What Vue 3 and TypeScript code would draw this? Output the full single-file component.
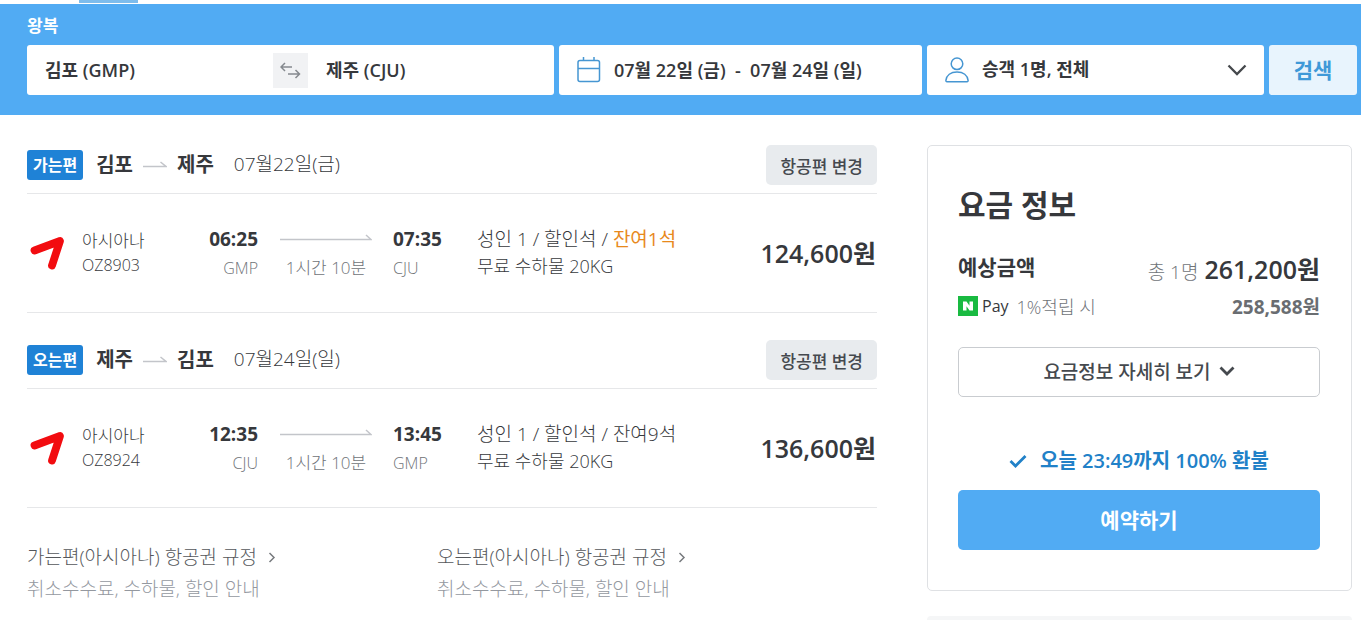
<script setup lang="ts">
import { ref } from 'vue'

interface Flight {
  id: string
  label: string
  from: string
  to: string
  date: string
  airline: string
  flightNo: string
  depart: string
  departCode: string
  arrive: string
  arriveCode: string
  duration: string
  seatLeft: string
  urgent: boolean
  price: string
}

const origin = ref('김포 (GMP)')
const destination = ref('제주 (CJU)')
const dates = ref('07월 22일 (금)  -  07월 24일 (일)')
const passengers = ref('승객 1명, 전체')

const swap = (): void => {
  const previous = origin.value
  origin.value = destination.value
  destination.value = previous
}

const flights: Flight[] = [
  {
    id: 'out', label: '가는편', from: '김포', to: '제주', date: '07월22일(금)',
    airline: '아시아나', flightNo: 'OZ8903', depart: '06:25', departCode: 'GMP',
    arrive: '07:35', arriveCode: 'CJU', duration: '1시간 10분',
    seatLeft: '잔여1석', urgent: true, price: '124,600원',
  },
  {
    id: 'back', label: '오는편', from: '제주', to: '김포', date: '07월24일(일)',
    airline: '아시아나', flightNo: 'OZ8924', depart: '12:35', departCode: 'CJU',
    arrive: '13:45', arriveCode: 'GMP', duration: '1시간 10분',
    seatLeft: '잔여9석', urgent: false, price: '136,600원',
  },
]
</script>

<template>
  <div class="page">
    <div class="tabs"><span class="tab-mark"></span></div>
    <header class="search">
      <p class="trip">왕복</p>
      <form class="fields" @submit.prevent>
        <div class="field route">
          <input v-model="origin" class="text" type="text" aria-label="출발지" />
          <button class="swap" type="button" aria-label="출발지와 도착지 바꾸기" @click="swap">
            <svg width="21" height="17" viewBox="0 0 21 17" fill="none" stroke="#85898e" stroke-width="1.5">
              <path d="M12 5H1.2M5 1 1 5l4 4M8 12h11.500M15.500 8l4 4-4 4" />
            </svg>
          </button>
          <input v-model="destination" class="text" type="text" aria-label="도착지" />
        </div>
        <div class="field">
          <svg class="lead" width="24" height="26" viewBox="0 0 24 26" fill="none" stroke="#4696d2" stroke-width="1.500">
            <rect x="1" y="3.500" width="21.500" height="21" rx="2" />
            <path d="M1 11.500h21.500M6.500 0v4M17 0v4" />
          </svg>
          <input v-model="dates" class="text" type="text" aria-label="여행 날짜" />
        </div>
        <div class="field">
          <svg class="lead" width="24" height="26" viewBox="0 0 24 26" fill="none" stroke="#4696d2" stroke-width="1.500">
            <circle cx="12" cy="6.800" r="5.800" />
            <path d="M2 24.800c-.8 0-1.200-.6-1.100-1.400C1.500 18.400 5.600 15 12 15s10.500 3.400 11.100 8.400c.1.800-.3 1.400-1.100 1.400z" />
          </svg>
          <select v-model="passengers" class="text" aria-label="승객 및 좌석">
            <option>승객 1명, 전체</option>
          </select>
          <svg class="caret" width="20" height="12" viewBox="0 0 20 12" fill="none" stroke="#45484c" stroke-width="2.300">
            <path d="m1.500 1.500 8.500 8.500 8.500-8.500" />
          </svg>
        </div>
        <button class="submit" type="submit">검색</button>
      </form>
    </header>

    <main class="content">
      <div class="journey">
        <section v-for="f in flights" :key="f.id" class="flight">
          <div class="head">
            <span class="badge">{{ f.label }}</span>
            <div class="where">
              <h2 class="cities">
                <span>{{ f.from }}</span>
                <svg width="24" height="12" viewBox="0 0 24 12" fill="none" stroke="#c3c5ca" stroke-width="1.500">
                  <path d="M0 9.500h23L17.500 5" />
                </svg>
                <span>{{ f.to }}</span>
              </h2>
              <span class="date">{{ f.date }}</span>
            </div>
            <button class="change" type="button">항공편 변경</button>
          </div>
          <div class="row">
            <svg class="logo" width="38" height="38" viewBox="0 0 38 38" fill="none" stroke="#f20c10" stroke-linecap="round" stroke-linejoin="round">
              <path d="M7.500 17.500 33 8 25 32.500" stroke-width="7.800" />
            </svg>
            <div class="airline">
              <span class="airline-name">{{ f.airline }}</span>
              <span>{{ f.flightNo }}</span>
            </div>
            <div class="stop depart">
              <strong>{{ f.depart }}</strong>
              <span>{{ f.departCode }}</span>
            </div>
            <div class="leg">
              <svg width="92" height="8" viewBox="0 0 92 8" fill="none" stroke="#c3c5ca" stroke-width="1.500">
                <path d="M0 5.500h91L86 1" />
              </svg>
              <span>{{ f.duration }}</span>
            </div>
            <div class="stop">
              <strong>{{ f.arrive }}</strong>
              <span>{{ f.arriveCode }}</span>
            </div>
            <div class="detail">
              <span class="fare">성인 1 / 할인석 / <em :class="{ urgent: f.urgent }">{{ f.seatLeft }}</em></span>
              <span>무료 수하물 20KG</span>
            </div>
            <strong class="price">{{ f.price }}</strong>
          </div>
        </section>

        <nav class="rules">
          <a v-for="f in flights" :key="f.id" class="rule" href="#">
            <span class="rule-title">
              {{ f.label }}({{ f.airline }}) 항공권 규정
              <svg width="8" height="11" viewBox="0 0 8 11" fill="none" stroke="#777a7e" stroke-width="1.500">
                <path d="m1.500 1 4.500 4.500L1.500 10" />
              </svg>
            </span>
            <span class="rule-note">취소수수료, 수하물, 할인 안내</span>
          </a>
        </nav>
      </div>

      <aside class="side">
        <section class="card">
          <h1 class="title">요금 정보</h1>
          <div class="line total">
            <strong class="label">예상금액</strong>
            <span class="sum"><span class="count">총 1명</span><strong>261,200원</strong></span>
          </div>
          <div class="line pay">
            <span class="npay">
              <svg width="20" height="20" viewBox="0 0 20 20">
                <path fill="#19ba41" d="M0 0h20v20H0z" />
                <path fill="#fff" d="M5 5.500h3.500l3 4.300V5.500H15v9h-3.500l-3-4.300v4.300H5z" />
              </svg>
              <span class="brand">Pay</span>
              <span>1%적립 시</span>
            </span>
            <strong>258,588원</strong>
          </div>
          <button class="more" type="button">
            요금정보 자세히 보기
            <svg width="16" height="11" viewBox="0 0 16 11" fill="none" stroke="#45494e" stroke-width="2.800">
              <path d="m1.500 1.500 6.500 6.500 6.500-6.500" />
            </svg>
          </button>
          <p class="refund">
            <svg width="18" height="14" viewBox="0 0 18 14" fill="none" stroke="#2181c8" stroke-width="2.800">
              <path d="m1.500 7 5 5L16.500 2" />
            </svg>
            오늘 23:49까지 100% 환불
          </p>
          <button class="book" type="button">예약하기</button>
        </section>
        <div class="next-card"></div>
      </aside>
    </main>
  </div>
</template>

<style>
body {
  background: #fff;
}
</style>

<style scoped>
.page {
  display: flex;
  flex-direction: column;
  min-height: 100vh;
  color: #36383c;
  font-family: "Open Sans", "Noto Sans CJK KR", sans-serif;
  font-size: 18px;
}
.page * {
  box-sizing: border-box;
}
button,
input,
select {
  margin: 0;
  padding: 0;
  border: 0;
  font-family: inherit;
}
button {
  padding-bottom: 2px;
  cursor: pointer;
}
svg {
  display: block;
  flex: none;
}
.tabs {
  height: 4px;
  padding-left: 79px;
}
.tab-mark {
  display: block;
  width: 59px;
  height: 3px;
  background: #7dbcec;
}
.search {
  padding: 10px 4px 20px 27px;
  background: #51abf3;
}
.trip {
  margin: 0 0 7px;
  color: #fff;
  font-size: 17px;
  font-weight: 600;
  line-height: 24px;
}
.fields {
  display: grid;
  grid-template-columns: 527fr 363fr 337fr 88fr;
  gap: 5px;
}
.field {
  display: flex;
  align-items: center;
  min-width: 0;
  height: 50px;
  padding: 0 17px 0 18px;
  border-radius: 3px;
  background: #fff;
}
.route {
  padding-right: 0;
}
.text {
  flex: 1;
  min-width: 0;
  height: 50px;
  padding-bottom: 2px;
  background: transparent;
  color: #36383c;
  font-size: 18px;
  font-weight: 600;
  white-space: pre;
  appearance: none;
  outline: none;
}
.lead {
  margin-right: 13px;
}
.swap {
  display: flex;
  align-items: center;
  justify-content: center;
  width: 35px;
  height: 35px;
  margin-right: 18px;
  padding: 0;
  background: #f1f2f4;
}
.caret {
  pointer-events: none;
}
.submit {
  border-radius: 3px;
  background: #e8f4fd;
  color: #3f99d8;
  font-size: 21px;
  font-weight: 600;
}
.content {
  display: grid;
  flex: 1;
  grid-template-columns: 2fr 1fr;
  gap: 50px;
  padding: 30px 9px 0 27px;
}
.flight {
  margin-bottom: 27px;
}
.head {
  display: flex;
  align-items: center;
  height: 49px;
  padding-bottom: 8px;
  border-bottom: 1px solid #e6e7e9;
}
.badge {
  padding: 0 6px;
  border-radius: 3px;
  background: #1f82d6;
  color: #fff;
  font-size: 16px;
  font-weight: 600;
  line-height: 30px;
}
.where {
  display: flex;
  align-items: center;
  gap: 20px;
  padding: 0 0 4px 13px;
}
.cities {
  display: flex;
  align-items: center;
  gap: 10px;
  margin: 0;
  font-size: 20px;
  font-weight: 600;
}
.date {
  font-size: 19px;
  font-weight: 300;
}
.change {
  height: 40px;
  margin-left: auto;
  padding: 0 14px;
  border-radius: 5px;
  background: #e8ebee;
  color: #45494e;
  font-size: 17px;
  font-weight: 500;
}
.row {
  display: grid;
  grid-template-columns: 55px 106px 70px 22px 92px 21px 84px 1fr auto;
  align-items: start;
  height: 119px;
  padding-top: 32px;
  border-bottom: 1px solid #e6e7e9;
}
.logo {
  margin-top: 7px;
}
.airline,
.stop,
.leg,
.detail {
  display: flex;
  flex-direction: column;
  white-space: nowrap;
}
.airline {
  padding-top: 2px;
  color: #36383c;
  font-size: 16px;
  font-weight: 300;
  line-height: 25px;
}
.airline-name {
  font-size: 17px;
}
.stop {
  grid-column: 7;
  color: #6f7378;
  font-size: 16px;
  font-weight: 300;
  line-height: 30px;
}
.stop strong {
  color: #36383c;
  font-size: 19px;
  font-weight: 700;
  line-height: 27px;
}
.depart {
  grid-column: 3;
  text-align: right;
}
.leg {
  grid-column: 5;
  align-items: center;
  color: #6f7378;
  font-size: 17px;
  font-weight: 300;
  line-height: 30px;
}
.leg svg {
  width: 100%;
  margin: 8px 0 11px;
}
.detail {
  font-size: 18px;
  font-weight: 300;
  line-height: 27px;
}
.fare {
  font-size: 19px;
}
.detail em {
  font-style: normal;
}
.detail .urgent {
  color: #e8891c;
  font-weight: 400;
}
.price {
  padding: 11px 1px 0 0;
  font-size: 25px;
  font-weight: 600;
  line-height: 32px;
}
.rules {
  display: flex;
  margin-top: 33px;
}
.rule {
  display: flex;
  flex-direction: column;
  width: 410px;
  color: #54575b;
  font-size: 19px;
  font-weight: 300;
  line-height: 32px;
  text-decoration: none;
  white-space: nowrap;
}
.rule-title {
  display: flex;
  align-items: center;
  gap: 11px;
}
.rule-note {
  color: #94989f;
}
.side {
  display: flex;
  flex-direction: column;
  gap: 25px;
}
.card {
  display: flex;
  flex-direction: column;
  padding: 38px 31px 40px 30px;
  border: 1px solid #dfe1e4;
  border-radius: 5px;
}
.title {
  margin: 0 0 21px;
  font-size: 30px;
  font-weight: 600;
  line-height: 42px;
}
.line {
  display: flex;
  align-items: center;
  justify-content: space-between;
  white-space: nowrap;
}
.total {
  height: 42px;
}
.label {
  padding-bottom: 4px;
  font-size: 21px;
  font-weight: 600;
}
.sum {
  display: flex;
  align-items: baseline;
  gap: 6px;
  font-size: 25px;
}
.sum strong {
  font-weight: 600;
}
.count {
  color: #6f7378;
  font-size: 19px;
  font-weight: 300;
}
.pay {
  height: 33px;
  margin-bottom: 25px;
  color: #6a6d71;
}
.pay strong {
  font-size: 19px;
}
.npay {
  display: flex;
  align-items: center;
  color: #6f7378;
  font-weight: 300;
}
.brand {
  margin: 0 8px 0 4px;
  color: #36383c;
  font-size: 16px;
  font-weight: 400;
}
.more {
  display: flex;
  align-items: center;
  justify-content: center;
  gap: 8px;
  height: 50px;
  border: 1px solid #c9ccd0;
  border-radius: 5px;
  background: #fff;
  color: #45494e;
  font-size: 19px;
  font-weight: 500;
}
.refund {
  display: flex;
  align-items: center;
  justify-content: center;
  gap: 13px;
  margin: 48px 0 13px;
  color: #2181c8;
  font-size: 20px;
  font-weight: 600;
  line-height: 32px;
  white-space: nowrap;
}
.book {
  height: 60px;
  border-radius: 5px;
  background: #51abf3;
  color: #fff;
  font-size: 21px;
  font-weight: 600;
}
.next-card {
  flex: 1;
  border-radius: 5px 5px 0 0;
  background: #f5f6f7;
}
</style>
